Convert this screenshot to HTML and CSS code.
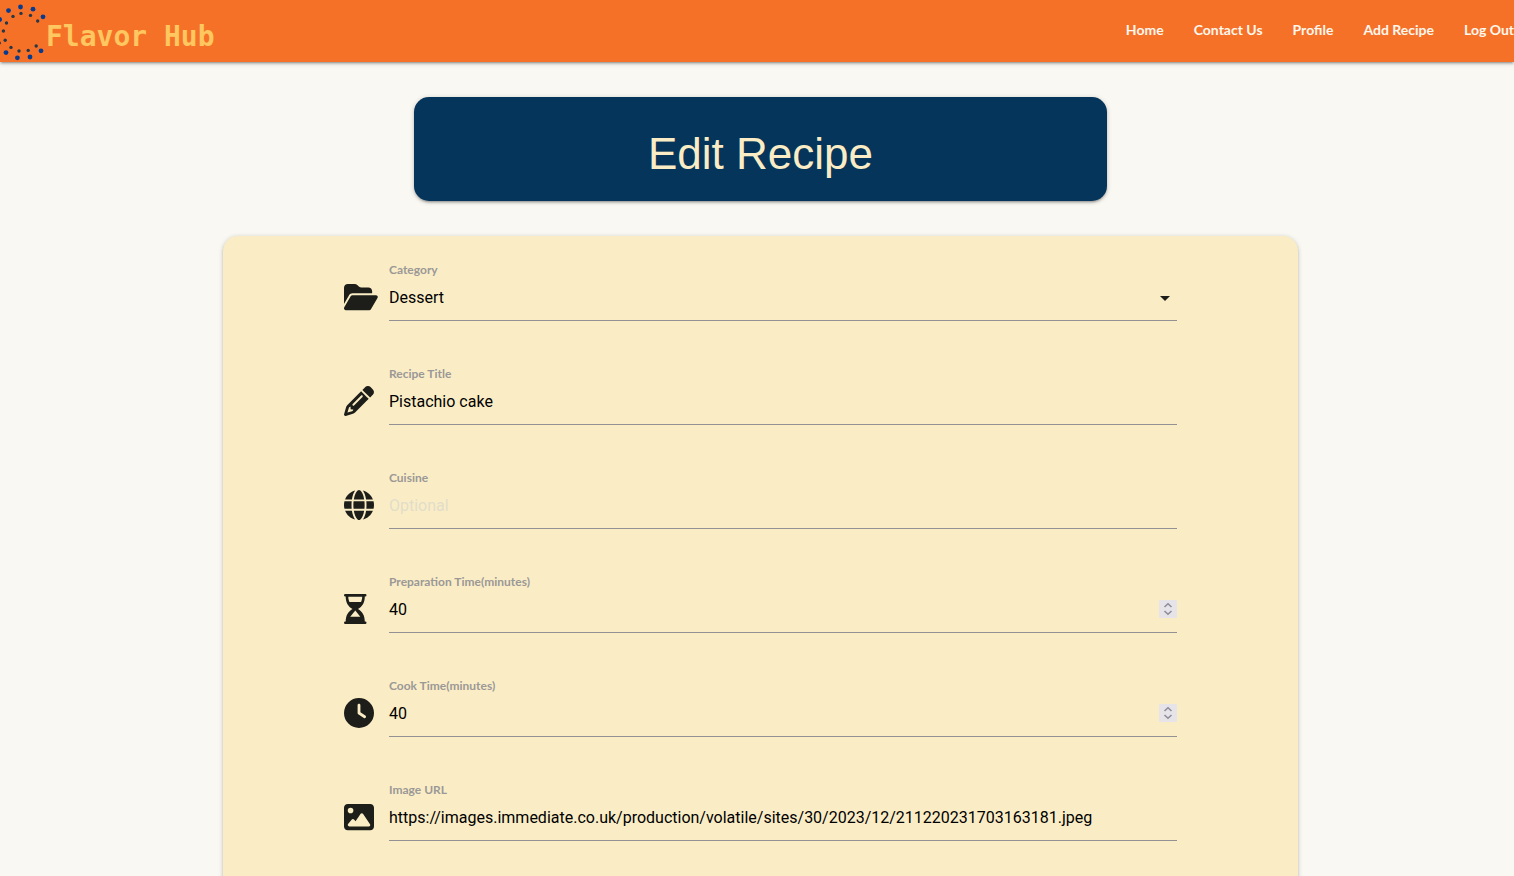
FILE: index.html
```html
<!DOCTYPE html>
<html lang="en">
<head>
<meta charset="utf-8">
<meta name="viewport" content="width=device-width, initial-scale=1">
<title>Flavor Hub - Edit Recipe</title>
<link rel="stylesheet" href="styles.css">
</head>
<body>
<header class="navbar">
  <a class="brand" href="#">
    <svg class="brand-mark" viewBox="0 0 46 62" aria-hidden="true">
      <g fill="#063b8f"><circle cx="20.5" cy="7" r="2.4"/><circle cx="8.5" cy="10.6" r="2.4"/><circle cx="33" cy="9.2" r="2.4"/><circle cx="43" cy="16.8" r="2.4"/><circle cx="-.4" cy="19.5" r="2.4"/><circle cx="41" cy="50.8" r="2.4"/><circle cx="30" cy="57" r="2.4"/><circle cx="17.4" cy="57.8" r="2.4"/><circle cx="6" cy="52.6" r="2.4"/></g>
      <g fill="#263746"><circle cx="21" cy="13.4" r="1.7"/><circle cx="13" cy="16.4" r="1.7"/><circle cx="30.5" cy="15.4" r="1.7"/><circle cx="37.7" cy="21" r="1.7"/><circle cx="6.5" cy="23" r="1.7"/><circle cx="3.4" cy="31" r="1.7"/><circle cx="5.2" cy="40.2" r="1.7"/><circle cx="11" cy="47.4" r="1.7"/><circle cx="19" cy="51" r="1.7"/><circle cx="28.2" cy="50.4" r="1.7"/><circle cx="36.2" cy="46" r="1.7"/><circle cx="-.6" cy="43" r="1.5"/></g>
    </svg>
    <span class="brand-name">Flavor Hub</span>
  </a>
  <nav class="nav-links">
    <a href="#">Home</a>
    <a href="#">Contact Us</a>
    <a href="#">Profile</a>
    <a href="#">Add Recipe</a>
    <a href="#">Log Out</a>
  </nav>
</header>
<main class="page">
  <h1 class="page-title">Edit Recipe</h1>
  <form class="card">
    <div class="field">
      <svg class="icon" viewBox="0 0 576 512" aria-hidden="true"><path d="M88.7 223.8L0 375.8V96C0 60.7 28.7 32 64 32H181.5c17 0 33.3 6.7 45.3 18.7l26.5 26.5c12 12 28.3 18.7 45.3 18.7H416c35.3 0 64 28.7 64 64v32H144c-22.8 0-43.8 12.1-55.3 31.8zm27.6 16.1C122.1 230 132.6 224 144 224H544c11.5 0 22 6.1 27.7 16.1s5.7 22.2-.1 32.1l-112 192C453.9 474 443.4 480 432 480H32c-11.5 0-22-6.1-27.7-16.1s-5.7-22.2 .1-32.1l112-192z"/></svg>
      <div class="field-body">
        <label for="category">Category</label>
        <select class="control" id="category"><option>Dessert</option></select>
        <svg class="caret" viewBox="0 0 10 5" aria-hidden="true"><path d="M0 0h10L5 5z"/></svg>
      </div>
    </div>
    <div class="field">
      <svg class="icon" viewBox="0 0 512 512" aria-hidden="true"><path d="M410.3 231l11.3-11.3-33.9-33.9-62.1-62.1L291.7 89.8l-11.3 11.3-22.6 22.6L58.6 322.9c-10.4 10.4-18 23.3-22.2 37.4L1 480.7c-2.5 8.4-.2 17.5 6.1 23.7s15.3 8.5 23.7 6.1l120.3-35.4c14.1-4.2 27-11.8 37.4-22.2L387.7 253.7 410.3 231zM160 399.4l-9.1 22.7c-4 3.1-8.5 5.4-13.3 6.9L59.4 452l23-78.1c1.4-4.9 3.8-9.4 6.9-13.3l22.7-9.1v32c0 8.8 7.2 16 16 16h32zM362.7 18.7L348.3 33.2 325.7 55.8 314.3 67.1l33.9 33.9 62.1 62.1 33.9 33.9 11.3-11.3 22.6-22.6 14.5-14.5c25-25 25-65.5 0-90.5L453.3 18.7c-25-25-65.5-25-90.5 0zm-47.4 168l-144 144c-6.2 6.2-16.4 6.2-22.6 0s-6.2-16.4 0-22.6l144-144c6.2-6.2 16.4-6.2 22.6 0s6.2 16.4 0 22.6z"/></svg>
      <div class="field-body">
        <label for="title">Recipe Title</label>
        <input class="control" id="title" type="text" value="Pistachio cake">
      </div>
    </div>
    <div class="field">
      <svg class="icon" viewBox="0 0 512 512" aria-hidden="true"><path d="M352 256c0 22.2-1.2 43.6-3.3 64H163.3c-2.2-20.4-3.3-41.8-3.3-64s1.2-43.6 3.3-64H348.7c2.2 20.4 3.3 41.8 3.3 64zm28.8-64H503.9c5.3 20.5 8.1 41.9 8.1 64s-2.8 43.5-8.1 64H380.8c2.1-20.6 3.2-42 3.2-64s-1.1-43.4-3.2-64zm112.6-32H376.7c-10-63.9-29.8-117.4-55.3-151.6c78.3 20.7 142 77.5 171.9 151.6zm-149.1 0H167.7c6.1-36.4 15.5-68.6 27-94.7c10.5-23.6 22.2-40.7 33.5-51.5C239.4 3.2 248.7 0 256 0s16.6 3.2 27.8 13.8c11.3 10.8 23 27.9 33.5 51.5c11.6 26 20.9 58.2 27 94.7zm-209 0H18.6C48.6 85.9 112.2 29.1 190.6 8.4C165.1 42.6 145.3 96.1 135.3 160zM8.1 192H131.2c-2.1 20.6-3.2 42-3.2 64s1.1 43.4 3.2 64H8.1C2.8 299.5 0 278.1 0 256s2.8-43.5 8.1-64zM194.7 446.6c-11.6-26-20.9-58.2-27-94.6H344.3c-6.1 36.4-15.5 68.6-27 94.6c-10.5 23.6-22.2 40.7-33.5 51.5C272.6 508.8 263.3 512 256 512s-16.6-3.2-27.8-13.8c-11.3-10.8-23-27.9-33.5-51.5zM135.3 352c10 63.9 29.8 117.4 55.3 151.6C112.2 482.9 48.6 426.1 18.6 352H135.3zm358.1 0c-30 74.1-93.6 130.9-171.9 151.6c25.5-34.2 45.2-87.7 55.3-151.6H493.4z"/></svg>
      <div class="field-body">
        <label for="cuisine">Cuisine</label>
        <input class="control" id="cuisine" type="text" placeholder="Optional">
      </div>
    </div>
    <div class="field">
      <svg class="icon" viewBox="0 0 23 30" aria-hidden="true"><path fill-rule="evenodd" d="M1.2 0H21.300a1.200 1.200 0 0 1 0 2.400H20.800C20.800 8.500 18.300 12.500 14 15C18.300 17.500 20.800 21.500 20.800 27.600H21.300a1.200 1.200 0 0 1 0 2.400H1.200a1.200 1.200 0 0 1 0-2.400H1.700C1.700 21.500 4.200 17.500 8.500 15C4.200 12.500 1.700 8.500 1.700 2.400H1.200a1.200 1.200 0 0 1 0-2.400zM4.300 2.800C4.300 4.800 4.800 6.500 5.400 8H17.100C17.700 6.500 18.200 4.800 18.200 2.800zM11.300 16.500L6.200 22.800H16.300z"/></svg>
      <div class="field-body">
        <label for="prep">Preparation Time(minutes)</label>
        <input class="control" id="prep" type="number" value="40">
        <svg class="stepper" viewBox="0 0 18 18" aria-hidden="true"><path d="M5.500 7 9 3.800 12.500 7M5.500 11 9 14.200 12.500 11"/></svg>
      </div>
    </div>
    <div class="field">
      <svg class="icon" viewBox="0 0 512 512" aria-hidden="true"><path d="M256 0a256 256 0 1 1 0 512A256 256 0 1 1 256 0zM232 120V256c0 8 4 15.500 10.700 20l96 64c11 7.400 25.900 4.400 33.300-6.700s4.400-25.900-6.700-33.300L280 243.200V120c0-13.300-10.700-24-24-24s-24 10.700-24 24z"/></svg>
      <div class="field-body">
        <label for="cook">Cook Time(minutes)</label>
        <input class="control" id="cook" type="number" value="40">
        <svg class="stepper" viewBox="0 0 18 18" aria-hidden="true"><path d="M5.500 7 9 3.800 12.500 7M5.500 11 9 14.200 12.500 11"/></svg>
      </div>
    </div>
    <div class="field">
      <svg class="icon" viewBox="0 0 512 512" aria-hidden="true"><path fill-rule="evenodd" d="M0 96C0 60.700 28.700 32 64 32H448c35.300 0 64 28.700 64 64V416c0 35.300-28.700 64-64 64H64c-35.300 0-64-28.700-64-64V96zM323.800 202.500c-4.500-6.600-11.900-10.500-19.800-10.500s-15.400 3.900-19.800 10.500l-87 127.600L170.700 297c-4.600-5.700-11.500-9-18.700-9s-14.200 3.300-18.700 9l-64 80c-5.800 7.200-6.900 17.100-2.900 25.400s12.400 13.600 21.600 13.600h96 32H424c8.900 0 17.100-4.900 21.200-12.800s3.600-17.400-1.400-24.700l-120-176zM112 192a48 48 0 1 0 0-96 48 48 0 1 0 0 96z"/></svg>
      <div class="field-body">
        <label for="image">Image URL</label>
        <input class="control" id="image" type="url" value="https://images.immediate.co.uk/production/volatile/sites/30/2023/12/211220231703163181.jpeg">
      </div>
    </div>
  </form>
</main>
</body>
</html>
```
FILE: styles.css
```css
* { box-sizing: border-box; }

body {
  margin: 0;
  background: #faf8f3;
  color: #000;
  font-family: Lato, sans-serif;
}

.navbar {
  display: flex;
  justify-content: space-between;
  height: 62px;
  background: #f67128;
  box-shadow: 0 2px 2px rgba(0, 0, 0, .14), 0 3px 1px -2px rgba(0, 0, 0, .12), 0 1px 5px rgba(0, 0, 0, .2);
}

.brand {
  display: flex;
  color: #ffc760;
  text-decoration: none;
}

.brand-mark {
  width: 46px;
  height: 62px;
}

.brand-name {
  padding-top: 6px;
  font: bold 28px/62px "DejaVu Sans Mono", monospace;
}

.nav-links {
  display: flex;
  gap: 30px;
}

.nav-links a {
  color: #fff8ee;
  font-size: 14px;
  font-weight: bold;
  line-height: 60px;
  text-decoration: none;
}

.page {
  padding: 35px 216px 0 223px;
}

.page-title {
  margin: 0 191px 35px;
  padding: 27px 0 17px;
  border-radius: 15px;
  background: #05355a;
  color: #faedc6;
  font: 44px/60px "Liberation Sans", sans-serif;
  text-align: center;
  box-shadow: 0 2px 2px rgba(0, 0, 0, .14), 0 3px 1px -2px rgba(0, 0, 0, .12), 0 1px 5px rgba(0, 0, 0, .2);
}

.card {
  display: grid;
  gap: 47px;
  padding: 28px 121px 60px;
  border-radius: 15px;
  background: #faedc6;
  box-shadow: 0 2px 2px rgba(0, 0, 0, .14), 0 3px 1px -2px rgba(0, 0, 0, .12), 0 1px 5px rgba(0, 0, 0, .2);
}

.field {
  display: grid;
  grid-template-columns: 45px 1fr;
}

.icon {
  height: 30px;
  margin-top: 18px;
  fill: #1d1e19;
}

.field-body {
  position: relative;
}

.field-body label {
  display: block;
  color: #9b9896;
  font-size: 12px;
  font-weight: bold;
  line-height: 12px;
}

.control {
  display: block;
  width: 100%;
  height: 45px;
  margin: 0;
  padding: 0 0 2px;
  border: 0;
  border-bottom: 1px solid #949195;
  border-radius: 0;
  outline: 0;
  appearance: none;
  background: transparent;
  color: #000;
  font: 16px Roboto, sans-serif;
}

.control::placeholder {
  color: #e2ddc9;
  opacity: 1;
}

.control[type="number"] {
  appearance: textfield;
}

.caret {
  position: absolute;
  top: 32px;
  right: 7px;
  width: 10px;
  height: 5px;
  fill: #1d1e19;
  pointer-events: none;
}

.stepper {
  position: absolute;
  top: 24px;
  right: 0;
  width: 18px;
  height: 18px;
  border-radius: 1px;
  background: #e6e4e9;
  fill: none;
  stroke: #8e8b99;
  stroke-width: 1.5;
  pointer-events: none;
}
```
